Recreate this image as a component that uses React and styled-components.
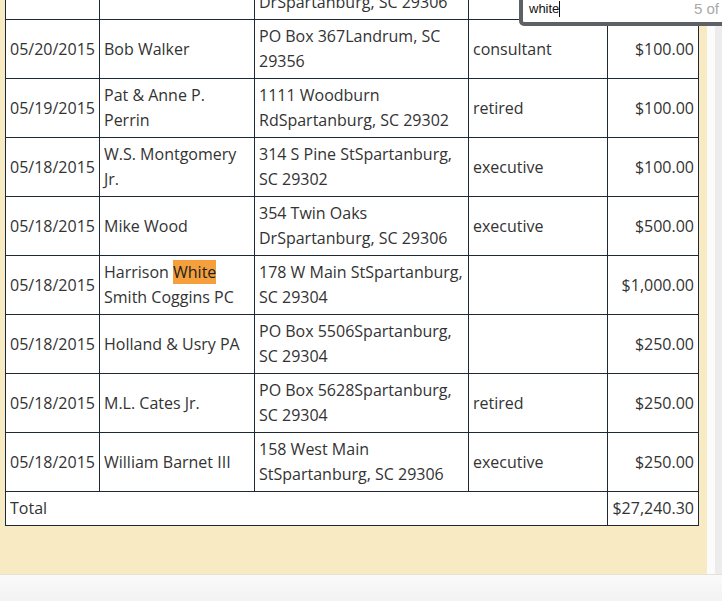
import React from 'react';
import styled, { createGlobalStyle } from 'styled-components';

const GlobalStyle = createGlobalStyle`
  html, body {
    margin: 0;
    padding: 0;
    background: #f6f6f6;
  }
  body {
    font-family: 'Open Sans', 'Liberation Sans', sans-serif;
  }
`;

const Window = styled.div`
  position: relative;
  width: 722px;
  height: 601px;
  overflow: hidden;
  display: flex;
  flex-direction: column;
`;

const Viewport = styled.div`
  display: flex;
  height: 574px;
  border-bottom: 1px solid #e4e0d4;
`;

const Panel = styled.div`
  width: 707px;
  background: #f8ebc4;
  overflow: hidden;
  padding-left: 5px;
  box-sizing: border-box;
`;

const Scrollbar = styled.div`
  flex: 1;
  background: linear-gradient(to right, #fbfbfb 0, #fbfbfb 8px, #ececec 8px);
`;

const Footer = styled.div`
  flex: 1;
  background: linear-gradient(to bottom, #fafafa, #f2f2f2);
`;

const Table = styled.table`
  margin-top: -40px;
  width: 694px;
  border-collapse: collapse;
  background: #fff;
  color: #333;
  font-size: 16px;
  line-height: 25px;

  td {
    border: 1px solid #1d2935;
    padding: 4px;
    vertical-align: middle;
  }
`;

const Cell = styled.td`
  width: ${(p) => p.$w}px;
  text-align: ${(p) => (p.$right ? 'right' : 'left')};
  white-space: ${(p) => (p.$nowrap ? 'nowrap' : 'normal')};
`;

const Mark = styled.span`
  background: #f5a03c;
  color: #222;
  padding: 1px 0;
`;

const FindBar = styled.div`
  position: absolute;
  top: -6px;
  left: 519px;
  width: 220px;
  height: 19px;
  background: #fff;
  border: 4px solid #5d6165;
  border-radius: 0 0 0 5px;
  display: flex;
  align-items: flex-end;
  justify-content: space-between;
  padding: 0 0 5px 6px;
  box-sizing: content-box;
  font-family: 'Liberation Sans', Arial, sans-serif;
  font-size: 13px;
  line-height: 16px;
`;

const Query = styled.span`
  color: #111;
  border-right: 1px solid #111;
`;

const Count = styled.span`
  color: #a9a9a9;
  font-size: 15px;
  margin-right: 30px;
`;

const rows = [
  ['', '', '354 Twin Oaks DrSpartanburg, SC 29306', '', ''],
  ['05/20/2015', 'Bob Walker', 'PO Box 367Landrum, SC 29356', 'consultant', '$100.00'],
  ['05/19/2015', 'Pat & Anne P. Perrin', '1111 Woodburn RdSpartanburg, SC 29302', 'retired', '$100.00'],
  ['05/18/2015', 'W.S. Montgomery Jr.', '314 S Pine StSpartanburg, SC 29302', 'executive', '$100.00'],
  ['05/18/2015', 'Mike Wood', '354 Twin Oaks DrSpartanburg, SC 29306', 'executive', '$500.00'],
  ['05/18/2015', null, '178 W Main StSpartanburg, SC 29304', '', '$1,000.00'],
  ['05/18/2015', 'Holland & Usry PA', 'PO Box 5506Spartanburg, SC 29304', '', '$250.00'],
  ['05/18/2015', 'M.L. Cates Jr.', 'PO Box 5628Spartanburg, SC 29304', 'retired', '$250.00'],
  ['05/18/2015', 'William Barnet III', '158 West Main StSpartanburg, SC 29306', 'executive', '$250.00'],
];

export default function App() {
  return (
    <>
      <GlobalStyle />
      <Window>
        <Viewport>
          <Panel>
            <Table>
              <tbody>
                {rows.map((r, i) => (
                  <tr key={i}>
                    <Cell $w={85} $nowrap>{r[0]}</Cell>
                    <Cell $w={146}>
                      {r[1] === null ? (
                        <>
                          Harrison <Mark>White</Mark> Smith Coggins PC
                        </>
                      ) : (
                        r[1]
                      )}
                    </Cell>
                    <Cell $w={205}>{r[2]}</Cell>
                    <Cell $w={130}>{r[3]}</Cell>
                    <Cell $w={82} $right>{r[4]}</Cell>
                  </tr>
                ))}
                <tr>
                  <Cell colSpan={4}>Total</Cell>
                  <Cell $right>$27,240.30</Cell>
                </tr>
              </tbody>
            </Table>
          </Panel>
          <Scrollbar />
        </Viewport>
        <Footer />
        <FindBar>
          <Query>white</Query>
          <Count>5 of</Count>
        </FindBar>
      </Window>
    </>
  );
}
